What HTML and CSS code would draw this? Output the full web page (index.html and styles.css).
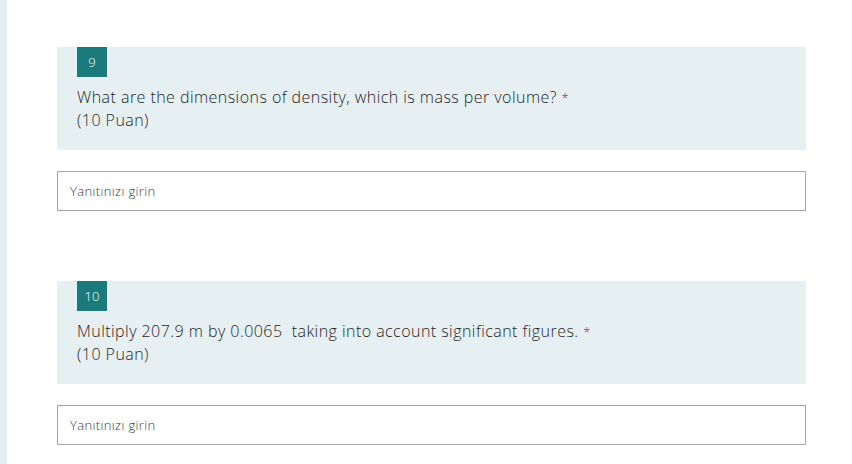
FILE: index.html
```html
<!DOCTYPE html>
<html>
<head>
<meta charset="utf-8">
<link rel="stylesheet" href="styles.css">
</head>
<body>
<div class="page">
  <div class="strip"></div>
  <main class="form">
    <section class="question">
      <div class="card">
        <div class="badge">9</div>
        <div class="title">What are the dimensions of density, which is mass per volume? <span class="req">*</span></div>
        <div class="points">(10 Puan)</div>
      </div>
      <div class="answer">Yanıtınızı girin</div>
    </section>
    <section class="question">
      <div class="card">
        <div class="badge">10</div>
        <div class="title">Multiply 207.9 m by 0.0065&nbsp;&nbsp;taking into account significant figures. <span class="req">*</span></div>
        <div class="points">(10 Puan)</div>
      </div>
      <div class="answer">Yanıtınızı girin</div>
    </section>
  </main>
</div>
</body>
</html>
```
FILE: styles.css
```css
html, body {
  margin: 0;
  padding: 0;
  background: #ffffff;
  font-family: "Open Sans", "Noto Sans", sans-serif;
  color: #333333;
}
.page {
  display: flex;
  height: 464px;
  overflow: hidden;
}
.strip {
  width: 7px;
  flex: none;
  background: #e4edf0;
}
.form {
  padding-left: 50px;
  width: 749px;
  padding-top: 47px;
  display: flex;
  flex-direction: column;
  gap: 70px;
}
.card {
  background: #e6eff2;
  padding: 0 20px 19px 20px;
}
.badge {
  width: 30px;
  height: 30px;
  background: #1b7a7c;
  color: #ffffff;
  font-size: 13px;
  font-weight: 300;
  display: flex;
  align-items: center;
  justify-content: center;
  margin-bottom: 9px;
}
.title, .points {
  font-size: 16px;
  font-weight: 300;
  line-height: 22px;
  letter-spacing: 0.45px;
  color: #262626;
}
.req {
  color: #a4262c;
  font-size: 13px;
  letter-spacing: 0;
}
.answer {
  margin-top: 21px;
  height: 38px;
  border: 1px solid #a6a6a6;
  display: flex;
  align-items: center;
  padding-left: 12px;
  font-size: 13px;
  font-weight: 300;
  letter-spacing: 0.35px;
  color: #3a3a3a;
}
```
